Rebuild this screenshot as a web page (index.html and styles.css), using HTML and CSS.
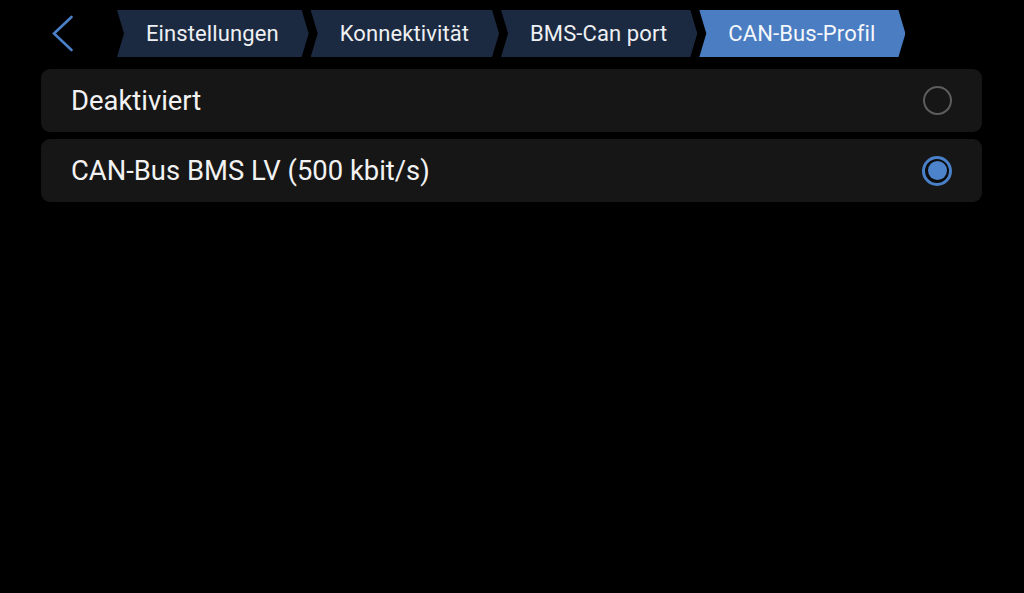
FILE: index.html
```html
<!DOCTYPE html>
<html lang="de">
<head>
<meta charset="utf-8">
<title>CAN-Bus-Profil</title>
<link rel="stylesheet" href="styles.css">
</head>
<body>
<header class="topbar">
  <div class="back">
    <svg class="back-icon" width="24" height="38" viewBox="0 0 24 38">
      <polyline points="21.5,2 4,18.5 21.5,35" fill="none" stroke="#4a80c8" stroke-width="2.6" stroke-linecap="round" stroke-linejoin="miter"/>
    </svg>
  </div>
  <nav class="crumbs">
    <div class="crumb crumb-first">Einstellungen</div>
    <div class="crumb">Konnektivität</div>
    <div class="crumb">BMS-Can port</div>
    <div class="crumb crumb-active">CAN-Bus-Profil</div>
  </nav>
</header>
<main class="list">
  <div class="row">
    <span class="row-label">Deaktiviert</span>
    <span class="radio"></span>
  </div>
  <div class="row">
    <span class="row-label">CAN-Bus BMS LV (500 kbit/s)</span>
    <span class="radio radio-on"><span class="radio-dot"></span></span>
  </div>
</main>
</body>
</html>
```

FILE: styles.css
```css
html, body {
  margin: 0;
  padding: 0;
  background: #000;
  height: 100%;
}

body {
  font-family: Roboto, "Noto Sans", "Liberation Sans", sans-serif;
  color: #f2f2f2;
}

.topbar {
  display: flex;
  align-items: center;
  height: 47px;
  padding: 10px 0 12px 0;
}

.back {
  width: 117px;
  height: 47px;
  display: flex;
  align-items: center;
  padding-left: 50px;
  box-sizing: border-box;
}

.back-icon {
  display: block;
}

.crumbs {
  display: flex;
  gap: 2px;
  height: 47px;
}

.crumb {
  height: 47px;
  display: flex;
  align-items: center;
  padding: 0 30px 0 29px;
  background: #1b2a41;
  color: #eef0f3;
  font-size: 22px;
  letter-spacing: 0.1px;
  clip-path: polygon(0 0, calc(100% - 7px) 0, 100% 50%, calc(100% - 7px) 100%, 0 100%, 7px 50%);
}

.crumb-active {
  background: #4a7dc2;
  color: #f4f7fb;
}

.list {
  display: flex;
  flex-direction: column;
  gap: 7px;
  padding: 0 42px 0 41px;
}

.row {
  height: 63px;
  display: flex;
  align-items: center;
  justify-content: space-between;
  background: #161616;
  border-radius: 9px;
  padding: 0 30px 0 30px;
}

.row-label {
  font-size: 27.4px;
  color: #f2f2f2;
}

.radio {
  width: 29px;
  height: 29px;
  box-sizing: border-box;
  border-radius: 50%;
  border: 2px solid #5d5d5d;
  display: flex;
  align-items: center;
  justify-content: center;
}

.radio-on {
  width: 30px;
  height: 30px;
  border: 3px solid #4a80c8;
  background: #0c0c0c;
}

.radio-dot {
  width: 19px;
  height: 19px;
  border-radius: 50%;
  background: #4d83cb;
}
```
